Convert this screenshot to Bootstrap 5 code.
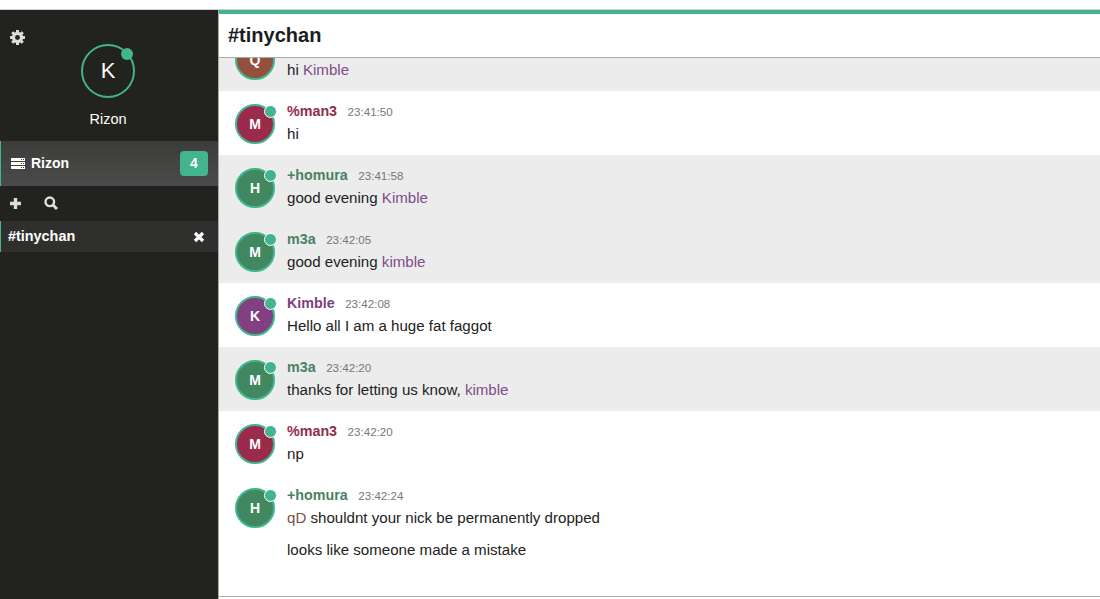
<!DOCTYPE html>
<html lang="en">
<head>
<meta charset="UTF-8">
<meta name="viewport" content="width=device-width, initial-scale=1">
<title>#tinychan</title>
<link href="https://cdn.jsdelivr.net/npm/bootstrap@5.3.3/dist/css/bootstrap.min.css" rel="stylesheet">
<style>
html, body { height: 599px; overflow: hidden; }
body { font-family: "Liberation Sans", Arial, sans-serif; font-size: 15.1px; color: #222; background: #fff; padding-top: 9px; }
.app-shell { height: 590px; border-top: 1px solid #d0d0d0; }
.side { width: 218px; background: #22231f; color: #fff; flex: none; }
.side-top { height: 131px; padding-right: 2px; }
.gear { left: 9px; top: 19px; }
.me-ring { width: 54px; height: 54px; margin-top: 34px; border: 2px solid #42b48e; font-size: 22px; line-height: 1; }
.me-dot { width: 12px; height: 12px; background: #42b48e; top: 2px; right: 0; }
.me-name { font-size: 14.5px; margin-top: 11px; line-height: 20px; }
.srv { height: 45px; background: linear-gradient(#3c3c3a, #4b4b4b); border-left: 1px solid #42b48e; padding: 0 10px; font-weight: 700; font-size: 14px; }
.srv-name { margin-left: 6px; }
.count { width: 28px; height: 25px; background: #42b48e; font-size: 14px; border-radius: 4px; }
.tools { height: 35px; padding: 0 0 1px 9px; gap: 22px; }
.chan { height: 31px; background: #2f302d; border-left: 1px solid #42b48e; padding: 0 13px 0 7px; font-weight: 700; font-size: 14.4px; }
.main-col { border-left: 1px solid #aaa; min-width: 0; }
.accent { height: 4px; background: #42b48e; flex: none; }
.head { height: 44px; border-bottom: 1px solid #aaa; padding: 0 0 2px 9px; font-size: 20px; font-weight: 700; color: #1c1c1c; flex: none; }
.log { height: 539px; overflow: hidden; border-bottom: 1px solid #aaa; }
.msg { height: 64px; padding: 13px 0 0 16px; }
.msg.first { height: 33px; padding-top: 0; }
.msg.grey { background: #ececec; }
.avatar { width: 40px; height: 40px; margin-right: 12px; color: #fff; font-weight: 700; font-size: 14px; border: 2px solid #42b48e; flex: none; }
.first .avatar { margin-top: -18px; }
.dot { width: 13px; height: 13px; top: -1px; right: -4px; background: #42b48e; border: 1px solid #fff; }
.msg-text { margin-top: -1px; }
.who { font-weight: 700; font-size: 14.3px; line-height: 16px; }
.stamp { font-size: 11.6px; color: #777; margin-left: 10.5px; }
.body-line { line-height: 20px; margin-top: 4px; }
.first .body-line { margin-top: 2px; }
.body-line.next { margin-top: 12px; }
.m { color: #8f2d48; }
.h { color: #47825f; }
.k { color: #7d3f80; }
.av-q { background: #94503e; }
.av-m { background: #9b2b4a; }
.av-h { background: #41875f; }
.av-k { background: #823f82; }
.ment-k { color: #7d4f88; }
.ment-q { color: #7d4f45; }
</style>
</head>

<body>
<div class="app-shell d-flex">
  <div class="side d-flex flex-column">
    <div class="side-top position-relative d-flex flex-column align-items-center">
      <svg class="gear position-absolute" width="17" height="17" viewBox="0 0 16 16" fill="none" stroke="#ddd">
        <circle cx="8" cy="8" r="3.800" stroke-width="3"/>
        <path stroke-width="2.800" d="M8 1v3M8 12v3M1 8h3M12 8h3M3 3l2 2M13 3l-2 2M3 13l2-2M13 13l-2-2"/>
      </svg>
      <div class="me-ring rounded-circle position-relative d-flex align-items-center justify-content-center">K<span class="me-dot rounded-circle position-absolute"></span></div>
      <div class="me-name">Rizon</div>
    </div>
    <div class="srv d-flex align-items-center">
      <svg width="14" height="11" viewBox="0 0 14 11" fill="#fff">
        <path fill-rule="evenodd" d="M0 0h14v3H0zM0 4h14v3H0zM0 8h14v3H0zM10 1v1h1V1zM12 1v1h1V1zM10 5v1h1V5zM12 5v1h1V5zM10 9v1h1V9zM12 9v1h1V9z"/>
      </svg>
      <span class="srv-name">Rizon</span>
      <span class="count ms-auto d-flex align-items-center justify-content-center">4</span>
    </div>
    <div class="tools d-flex align-items-center">
      <svg width="13" height="13" viewBox="0 0 13 13" fill="#ddd"><path d="M4.800 1h3.400v3.800H12v3.400H8.200V12H4.800V8.200H1V4.800h3.800z"/></svg>
      <svg width="14" height="14" viewBox="0 0 14 14" fill="none" stroke="#ddd"><circle cx="5.800" cy="5.800" r="4.300" stroke-width="2.400"/><path d="M9 9l4 4" stroke-width="3"/></svg>
    </div>
    <div class="chan d-flex align-items-center justify-content-between">
      <span>#tinychan</span>
      <svg width="12" height="12" viewBox="0 0 12 12" stroke="#fff" stroke-width="3.200"><path d="M2 2l8 8M10 2l-8 8"/></svg>
    </div>
  </div>

  <div class="main-col flex-grow-1 d-flex flex-column">
    <div class="accent"></div>
    <div class="head d-flex align-items-center">#tinychan</div>
    <div class="log">
      <div class="msg first grey d-flex">
        <div class="avatar av-q rounded-circle d-flex align-items-center justify-content-center">Q</div>
        <div class="body-line">hi <span class="ment-k">Kimble</span></div>
      </div>
      <div class="msg d-flex">
        <div class="avatar av-m rounded-circle position-relative d-flex align-items-center justify-content-center">M<span class="dot rounded-circle position-absolute"></span></div>
        <div class="msg-text"><div class="who"><span class="m">%man3</span><span class="stamp fw-normal">23:41:50</span></div><div class="body-line">hi</div></div>
      </div>
      <div class="msg grey d-flex">
        <div class="avatar av-h rounded-circle position-relative d-flex align-items-center justify-content-center">H<span class="dot rounded-circle position-absolute"></span></div>
        <div class="msg-text"><div class="who"><span class="h">+homura</span><span class="stamp fw-normal">23:41:58</span></div><div class="body-line">good evening <span class="ment-k">Kimble</span></div></div>
      </div>
      <div class="msg grey d-flex">
        <div class="avatar av-h rounded-circle position-relative d-flex align-items-center justify-content-center">M<span class="dot rounded-circle position-absolute"></span></div>
        <div class="msg-text"><div class="who"><span class="h">m3a</span><span class="stamp fw-normal">23:42:05</span></div><div class="body-line">good evening <span class="ment-k">kimble</span></div></div>
      </div>
      <div class="msg d-flex">
        <div class="avatar av-k rounded-circle position-relative d-flex align-items-center justify-content-center">K<span class="dot rounded-circle position-absolute"></span></div>
        <div class="msg-text"><div class="who"><span class="k">Kimble</span><span class="stamp fw-normal">23:42:08</span></div><div class="body-line">Hello all I am a huge fat faggot</div></div>
      </div>
      <div class="msg grey d-flex">
        <div class="avatar av-h rounded-circle position-relative d-flex align-items-center justify-content-center">M<span class="dot rounded-circle position-absolute"></span></div>
        <div class="msg-text"><div class="who"><span class="h">m3a</span><span class="stamp fw-normal">23:42:20</span></div><div class="body-line">thanks for letting us know, <span class="ment-k">kimble</span></div></div>
      </div>
      <div class="msg d-flex">
        <div class="avatar av-m rounded-circle position-relative d-flex align-items-center justify-content-center">M<span class="dot rounded-circle position-absolute"></span></div>
        <div class="msg-text"><div class="who"><span class="m">%man3</span><span class="stamp fw-normal">23:42:20</span></div><div class="body-line">np</div></div>
      </div>
      <div class="msg d-flex">
        <div class="avatar av-h rounded-circle position-relative d-flex align-items-center justify-content-center">H<span class="dot rounded-circle position-absolute"></span></div>
        <div class="msg-text"><div class="who"><span class="h">+homura</span><span class="stamp fw-normal">23:42:24</span></div><div class="body-line"><span class="ment-q">qD</span> shouldnt your nick be permanently dropped</div><div class="body-line next">looks like someone made a mistake</div></div>
      </div>
    </div>
  </div>
</div>
</body>
</html>
